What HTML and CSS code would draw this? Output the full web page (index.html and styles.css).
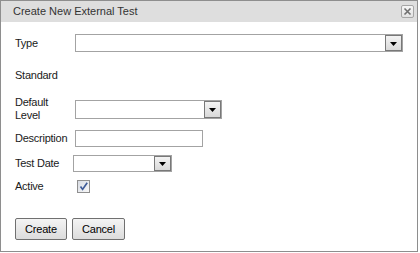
FILE: index.html
```html
<!DOCTYPE html>
<html>
<head>
<meta charset="utf-8">
<link rel="stylesheet" href="styles.css">
</head>
<body>
<div class="dialog">
  <div class="titlebar">
    <span class="title">Create New External Test</span>
    <span class="close" title="Close">
      <svg width="11" height="11" viewBox="0 0 11 11"><path d="M2.5 2.5 L8.5 8.5 M8.5 2.5 L2.5 8.5" stroke="#6f6f6f" stroke-width="1.6" fill="none"/></svg>
    </span>
  </div>
  <div class="content">
    <div class="form">
      <div class="label">Type</div>
      <div class="cell"><div class="select sel-type"><span class="value"></span><span class="drop"><svg width="7" height="4" viewBox="0 0 7 4"><path d="M0 0 H7 L3.5 4 Z" fill="#000"/></svg></span></div></div>

      <div class="label">Standard</div>
      <div class="cell"></div>

      <div class="label two">Default Level</div>
      <div class="cell"><div class="select sel-level"><span class="value"></span><span class="drop"><svg width="7" height="4" viewBox="0 0 7 4"><path d="M0 0 H7 L3.5 4 Z" fill="#000"/></svg></span></div></div>

      <div class="label">Description</div>
      <div class="cell"><input class="text" type="text"></div>

      <div class="label">Test Date</div>
      <div class="cell"><div class="select sel-date"><span class="value"></span><span class="drop"><svg width="7" height="4" viewBox="0 0 7 4"><path d="M0 0 H7 L3.5 4 Z" fill="#000"/></svg></span></div></div>

      <div class="label">Active</div>
      <div class="cell"><span class="check"><svg width="11" height="11" viewBox="0 0 11 11"><path d="M2.5 5.5 L4.6 8.4 L9.2 1.8" stroke="#3e5b98" stroke-width="1.7" fill="none"/></svg></span></div>
    </div>
    <div class="buttons">
      <button class="btn btn-create">Create</button>
      <button class="btn btn-cancel">Cancel</button>
    </div>
  </div>
</div>
</body>
</html>
```

FILE: styles.css
```css
html, body {
  margin: 0;
  padding: 0;
  background: #ffffff;
}
body {
  font-family: "Liberation Sans", Arial, sans-serif;
  font-size: 11px;
  color: #1a1a1a;
}
.dialog {
  box-sizing: border-box;
  width: 418px;
  height: 252px;
  border: 1px solid #8e8e8e;
  background: #ffffff;
  display: flex;
  flex-direction: column;
}
.titlebar {
  height: 21px;
  background: #dedede;
  display: flex;
  align-items: center;
  justify-content: space-between;
  padding: 0 3px 1px 12px;
  box-sizing: border-box;
}
.title {
  color: #333333;
  font-size: 11px;
}
.close {
  box-sizing: border-box;
  width: 13px;
  height: 13px;
  border: 1px solid #a6a6a6;
  border-radius: 2px;
  background: linear-gradient(#f6f6f6, #e2e2e2);
  display: flex;
  align-items: center;
  justify-content: center;
}
.close svg { display: block; }
.content {
  padding: 9px 0 0 14px;
}
.form {
  display: grid;
  grid-template-columns: 58px 1fr;
  grid-template-rows: 24px 40px 28px 30px 20px 26px;
  align-items: center;
}
.label {
  letter-spacing: -0.25px;
  white-space: nowrap;
}
.label.two {
  white-space: normal;
  width: 50px;
  line-height: 13px;
}
.cell {
  display: flex;
  align-items: center;
}
.select {
  box-sizing: border-box;
  display: flex;
  border: 1px solid #a3a3a3;
  background: #ffffff;
}
.select .value { flex: 1; }
.select .drop {
  box-sizing: border-box;
  width: 17px;
  border: 1px solid #787878;
  background: linear-gradient(#f3f3f3, #d9d9d9);
  display: flex;
  align-items: center;
  justify-content: center;
  padding-top: 1px;
}
.select .drop svg { display: block; }
.sel-type {
  margin-left: 2px;
  width: 328px;
  height: 18px;
}
.sel-level {
  margin-left: 2px;
  width: 147px;
  height: 19px;
}
.sel-date {
  margin-left: 0;
  width: 99px;
  height: 17px;
}
.text {
  box-sizing: border-box;
  margin: 0 0 0 2px;
  width: 128px;
  height: 17px;
  border: 1px solid #a3a3a3;
  padding: 0 2px;
  font: inherit;
  outline: none;
}
.check {
  box-sizing: border-box;
  margin-left: 4px;
  width: 13px;
  height: 13px;
  border: 1px solid #8f8f8f;
  background: linear-gradient(135deg, #d8dce4, #f8f8f8);
  display: flex;
  align-items: center;
  justify-content: center;
}
.check svg { display: block; }
.buttons {
  display: flex;
  gap: 5px;
  margin-top: 19px;
  padding-left: 0;
}
.btn {
  box-sizing: border-box;
  height: 22px;
  margin: 0;
  padding: 0;
  border: 1px solid #707070;
  border-radius: 2px;
  background: linear-gradient(#f4f4f4, #dcdcdc);
  font-family: "Liberation Sans", Arial, sans-serif;
  font-size: 11px;
  color: #000000;
  letter-spacing: -0.2px;
}
.btn-create { width: 52px; }
.btn-cancel { width: 53px; }
```
